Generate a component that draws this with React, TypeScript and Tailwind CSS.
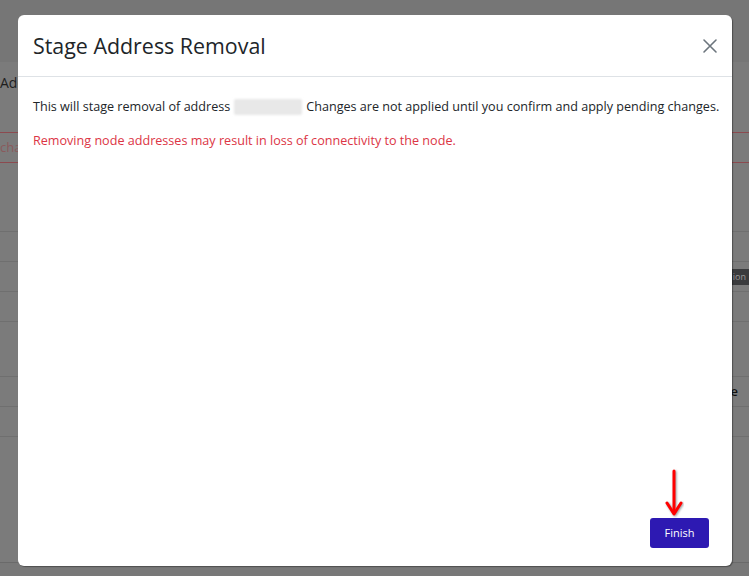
import React from "react";

const font = { fontFamily: '"Open Sans", "Liberation Sans", sans-serif' };

function BgRow({ h, children }: { h: string; children?: React.ReactNode }) {
  return <div className={`${h} border-b border-[#6f6f6f] flex items-center justify-between`}>{children}</div>;
}

export default function App() {
  return (
    <div className="relative w-[749px] h-[576px] overflow-hidden bg-[#7b7b7b]" style={font}>
      {/* background page (dimmed) */}
      <div className="flex flex-col h-full">
        <div className="h-[62px] bg-[#767676]" />
        <div className="h-[70px] pt-[11px]">
          <div className="w-[18px] overflow-hidden whitespace-nowrap text-[14px] leading-[20px] text-[#1e1e1e]">Add</div>
        </div>
        <div className="h-[31px] border-y border-[#8c4a4f] flex items-center">
          <div className="w-[18px] overflow-hidden whitespace-nowrap text-[13px] text-[#8a5a5c]">chan</div>
        </div>
        <div className="h-[69px] border-b border-[#6f6f6f]" />
        <BgRow h="h-[30px]" />
        <BgRow h="h-[30px]">
          <span />
          <span className="bg-[#3a3b3d] text-[#9a9a9a] text-[9px] pl-[3px] pr-1 h-[16px] leading-[16px] -mr-[1px]">ion</span>
        </BgRow>
        <BgRow h="h-[30px]" />
        <BgRow h="h-[55px]" />
        <BgRow h="h-[30px]">
          <span />
          <span className="text-[13px] font-semibold text-[#111] mr-[11px]">e</span>
        </BgRow>
        <BgRow h="h-[30px]" />
        <div className="flex-1" />
        <div className="h-[14px] border-t border-[#6a6a6a] bg-[#787878]" />
      </div>

      {/* modal */}
      <div className="absolute left-[18px] top-[15px] w-[714px] h-[551px] bg-white rounded-[6px] shadow-[1px_1px_1px_rgba(0,0,0,0.35)] flex flex-col">
        <div className="h-[62px] border-b border-[#dee2e6] flex items-center justify-between pl-[15px] pr-[13px]">
          <h2 className="text-[21.4px] text-[#212529] leading-none">Stage Address Removal</h2>
          <svg width="16" height="16" viewBox="0 0 16 16" className="mr-[1px]">
            <path d="M2 2 L14 14 M14 2 L2 14" stroke="#6c757d" strokeWidth="1.6" strokeLinecap="round" />
          </svg>
        </div>
        <div className="flex-1 px-[15px] pt-[20px] text-[12.6px] leading-[20px]">
          <p className="text-[#212529] whitespace-nowrap">
            This will stage removal of address
            <span className="inline-block align-middle w-[68px] h-[16px] mx-[4px] -mt-[2px] rounded-[2px] bg-[#e8e8e8] blur-[1px]" />
            Changes are not applied until you confirm and apply pending changes.
          </p>
          <p className="text-[#dc3545] mt-[14px]">
            Removing node addresses may result in loss of connectivity to the node.
          </p>
        </div>
        <div className="flex justify-end pr-[23px] pb-[18px]">
          <div className="relative">
            <svg width="20" height="52" viewBox="0 0 20 52" className="absolute left-[14px] -top-[50px]">
              <g style={{ filter: "drop-shadow(1px 1px 1px rgba(0,0,0,0.4))" }}>
                <path d="M10 3 L10 44" stroke="#ff0000" strokeWidth="3" strokeLinecap="round" />
                <path d="M3 35 L10 46 L17 35" stroke="#ff0000" strokeWidth="3" fill="none" strokeLinecap="round" strokeLinejoin="round" />
              </g>
            </svg>
            <button className="w-[59px] h-[30px] rounded-[3px] bg-[#2d19b2] text-white text-[11px]">Finish</button>
          </div>
        </div>
      </div>
    </div>
  );
}
